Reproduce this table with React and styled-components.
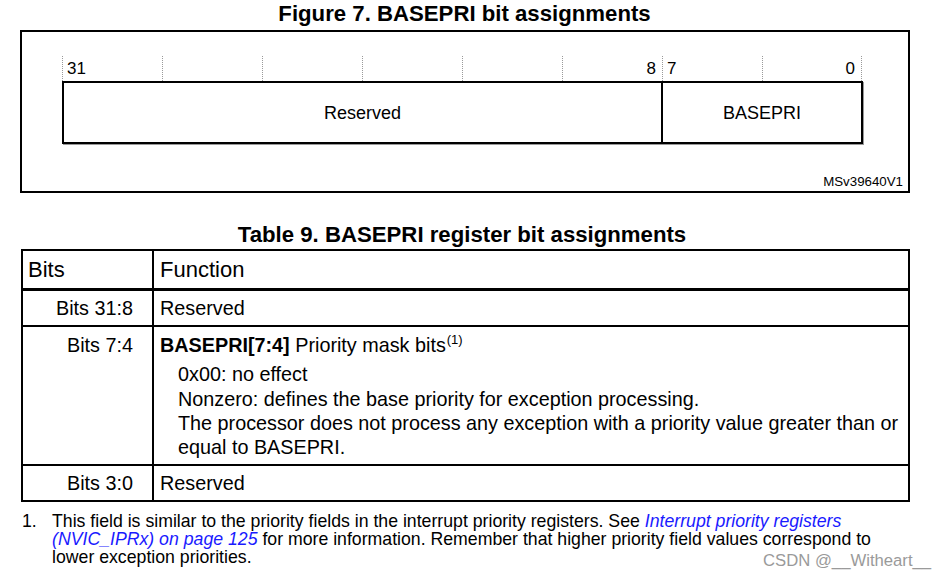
import React from "react";
import styled, { createGlobalStyle } from "styled-components";

const Global = createGlobalStyle`
  html, body { margin: 0; padding: 0; background: #fff; }
  body { font-family: "Liberation Sans", Arial, sans-serif; color: #000; }
  * { box-sizing: border-box; }
`;

const Page = styled.div`
  position: relative;
  width: 947px;
  height: 578px;
  overflow: hidden;
  background: #fff;
  padding-top: 2px;
`;

const Caption = styled.div`
  font-weight: bold;
  font-size: 22.2px;
  text-align: center;
  line-height: 24px;
  padding-right: ${(p) => p.$shift || 0}px;
`;

const FigureBox = styled.div`
  margin: 4px 0 0 20px;
  width: 890px;
  height: 163px;
  border: 2px solid #000;
  display: flex;
  flex-direction: column;
  padding: 24px 0 0 40px;
`;

const Scale = styled.div`
  display: grid;
  grid-template-columns: repeat(8, 100px);
  height: 25px;
  width: 801px;
`;

const Tick = styled.div`
  border-left: 1px dotted #9a9a9a;
  ${(p) => (p.$last ? "border-right: 1px dotted #9a9a9a;" : "")}
  display: flex;
  justify-content: ${(p) => (p.$right ? "flex-end" : "flex-start")};
  align-items: flex-start;
  padding: 4px 6px 0 4px;
  font-size: 17px;
  line-height: 17px;
`;

const Register = styled.div`
  display: flex;
  width: 801px;
  height: 63px;
  border: 2px solid #000;
  box-shadow: 1px 1px 0 #999;
`;

const Field = styled.div`
  width: ${(p) => p.$w}px;
  display: flex;
  align-items: center;
  justify-content: center;
  font-size: 18px;
  padding-top: 2px;
  ${(p) => (p.$divider ? "border-right: 2px solid #000;" : "")}
`;

const FigId = styled.div`
  margin-top: auto;
  margin-bottom: 2px;
  align-self: flex-end;
  margin-right: 5px;
  font-size: 13.3px;
  line-height: 14px;
`;

const TableTitle = styled(Caption)`
  margin-top: 30px;
`;

const TableBox = styled.div`
  margin: 2px 0 0 21px;
  width: 889px;
  border: 2px solid #000;
  font-size: 19.8px;
`;

const Row = styled.div`
  display: grid;
  grid-template-columns: 131px 1fr;
  height: ${(p) => p.$h}px;
  border-bottom: ${(p) => p.$rule || 0}px solid #000;
`;

const BitsCell = styled.div`
  border-right: 2px solid #000;
  text-align: ${(p) => (p.$head ? "left" : "right")};
  padding: ${(p) => (p.$head ? "0 0 0 5px" : "0 19px 0 0")};
  padding-top: ${(p) => p.$top || 0}px;
  line-height: ${(p) => p.$lh}px;
  font-size: ${(p) => (p.$head ? "22px" : "inherit")};
`;

const FuncCell = styled.div`
  padding: 0 6px;
  padding-top: ${(p) => p.$top || 0}px;
  line-height: ${(p) => p.$lh}px;
  font-size: ${(p) => (p.$head ? "22px" : "inherit")};
`;

const Lead = styled.div`
  margin-bottom: 5px;
`;

const Sub = styled.div`
  padding-left: 18px;
`;

const Sup = styled.sup`
  font-size: 13px;
  vertical-align: 8px;
  line-height: 0;
  margin-left: 1px;
`;

const Notes = styled.div`
  display: flex;
  margin: 10px 0 0 22px;
  font-size: 17.7px;
  line-height: 18px;
`;

const NoteNum = styled.div`
  width: 30px;
`;

const NoteText = styled.div`
  width: 840px;
`;

const Link = styled.span`
  color: #1a1aff;
  font-style: italic;
`;

const Watermark = styled.div`
  position: absolute;
  left: 763px;
  top: 551px;
  font-size: 16.7px;
  line-height: 20px;
  color: #9a9a9a;
`;

export default function App() {
  return (
    <Page>
      <Global />
      <Caption $shift={18}>Figure 7. BASEPRI bit assignments</Caption>
      <FigureBox>
        <Scale>
          <Tick>31</Tick>
          <Tick />
          <Tick />
          <Tick />
          <Tick />
          <Tick $right>8</Tick>
          <Tick>7</Tick>
          <Tick $right $last>0</Tick>
        </Scale>
        <Register>
          <Field $w={599} $divider>Reserved</Field>
          <Field $w={198}>BASEPRI</Field>
        </Register>
        <FigId>MSv39640V1</FigId>
      </FigureBox>
      <TableTitle $shift={23}>Table 9. BASEPRI register bit assignments</TableTitle>
      <TableBox>
        <Row $h={40} $rule={3}>
          <BitsCell $head $lh={37}>Bits</BitsCell>
          <FuncCell $head $lh={37}>Function</FuncCell>
        </Row>
        <Row $h={36} $rule={2}>
          <BitsCell $lh={34}>Bits 31:8</BitsCell>
          <FuncCell $lh={34}>Reserved</FuncCell>
        </Row>
        <Row $h={139} $rule={2}>
          <BitsCell $lh={24} $top={6}>Bits 7:4</BitsCell>
          <FuncCell $lh={24.3} $top={6}>
            <Lead>
              <b>BASEPRI[7:4]</b> Priority mask bits<Sup>(1)</Sup>
            </Lead>
            <Sub>0x00: no effect</Sub>
            <Sub>Nonzero: defines the base priority for exception processing.</Sub>
            <Sub>
              The processor does not process any exception with a priority value greater than or equal to
              BASEPRI.
            </Sub>
          </FuncCell>
        </Row>
        <Row $h={34}>
          <BitsCell $lh={34}>Bits 3:0</BitsCell>
          <FuncCell $lh={34}>Reserved</FuncCell>
        </Row>
      </TableBox>
      <Notes>
        <NoteNum>1.</NoteNum>
        <NoteText>
          This field is similar to the priority fields in the interrupt priority registers. See{" "}
          <Link>Interrupt priority registers (NVIC_IPRx) on page 125</Link> for more information. Remember
          that higher priority field values correspond to lower exception priorities.
        </NoteText>
      </Notes>
      <Watermark>CSDN @__Witheart__</Watermark>
    </Page>
  );
}
